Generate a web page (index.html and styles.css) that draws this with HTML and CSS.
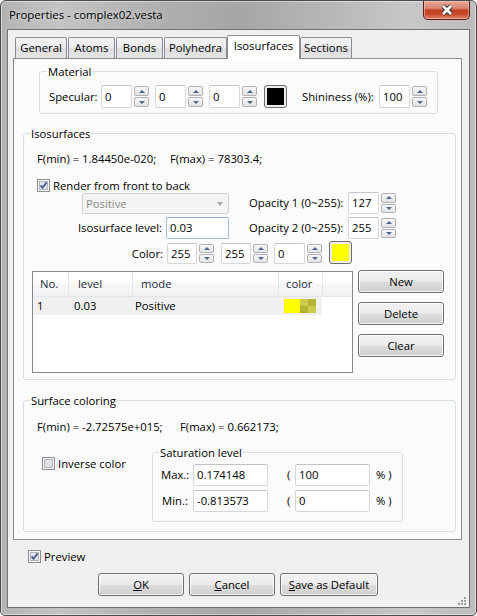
FILE: index.html
```html
<!DOCTYPE html>
<html>
<head>
<meta charset="utf-8">
<title>Properties - complex02.vesta</title>
<link rel="stylesheet" href="styles.css">
</head>
<body>
<div class="window">
  <div class="titlebar">
    <span class="title">Properties - complex02.vesta</span>
    <div class="close">
      <svg width="14" height="12" viewBox="0 0 14 12"><path d="M3 2 L11 10 M11 2 L3 10" stroke="#3a3a3a" stroke-width="4.6" fill="none"/><path d="M3 2 L11 10 M11 2 L3 10" stroke="#ffffff" stroke-width="2.6" fill="none"/></svg>
    </div>
  </div>
  <div class="client">
    <div class="tabs">
      <div class="tab t-general">General</div>
      <div class="tab t-atoms">Atoms</div>
      <div class="tab t-bonds">Bonds</div>
      <div class="tab t-poly">Polyhedra</div>
      <div class="tab sel t-iso">Isosurfaces</div>
      <div class="tab t-sect">Sections</div>
    </div>
    <div class="page">
      <fieldset class="grp g-material">
        <legend class="lg-material">Material</legend>
        <div class="row mat-row">
          <span class="lbl w-spec">Specular:</span>
          <div class="tb w31">0</div>
          <div class="spin ml2"><span class="up"></span><span class="dn"></span></div>
          <div class="tb w31 ml6">0</div>
          <div class="spin ml2"><span class="up"></span><span class="dn"></span></div>
          <div class="tb w31 ml6">0</div>
          <div class="spin ml2"><span class="up"></span><span class="dn"></span></div>
          <div class="swatch ml7"><i class="black"></i></div>
          <span class="lbl w-shin">Shininess (%):</span>
          <div class="tb w31">100</div>
          <div class="spin ml2"><span class="up"></span><span class="dn"></span></div>
        </div>
      </fieldset>

      <fieldset class="grp g-iso">
        <legend class="lg-iso">Isosurfaces</legend>
        <div class="fline iso-f"><span class="fmin1">F(min) = 1.84450e-020;</span><span>F(max) = 78303.4;</span></div>
        <div class="checkrow iso-check">
          <svg class="cb" width="13" height="13" viewBox="0 0 13 13"><rect x="0.5" y="0.5" width="12" height="12" fill="#f6f6f6" stroke="#8e8f8f"/><rect x="2.5" y="2.5" width="8" height="8" fill="#e3e6ea" stroke="#b3b7bc"/><path d="M3.6 6.4 L5.6 8.8 L9.6 3.4" stroke="#4a5f97" stroke-width="1.9" fill="none"/></svg>
          <span class="cbtext">Render from front to back</span>
        </div>
        <div class="row rowA">
          <div class="combo"><span>Positive</span><i class="carrow"></i></div>
          <span class="lbl w-op">Opacity 1 (0~255):</span>
          <div class="tb w31 h22">127</div>
          <div class="spin ml2 h22"><span class="up"></span><span class="dn"></span></div>
        </div>
        <div class="row rowB">
          <span class="lbl rlbl w-lvl">Isosurface level:</span>
          <div class="tb w63 h22 focus">0.03</div>
          <span class="lbl w-op ml20">Opacity 2 (0~255):</span>
          <div class="tb w31 h22">255</div>
          <div class="spin ml2 h22"><span class="up"></span><span class="dn"></span></div>
        </div>
        <div class="row rowC">
          <span class="lbl rlbl w-col">Color:</span>
          <div class="tb w30 h21 mt2">255</div>
          <div class="spin ml2 h21 mt2"><span class="up"></span><span class="dn"></span></div>
          <div class="tb w30 h21 mt2 ml7">255</div>
          <div class="spin ml2 h21 mt2"><span class="up"></span><span class="dn"></span></div>
          <div class="tb w31 h21 mt2 ml6">0</div>
          <div class="spin ml2 h21 mt2"><span class="up"></span><span class="dn"></span></div>
          <div class="swatch ml7"><i class="yellow"></i></div>
        </div>
        <div class="row listrow">
          <div class="list">
            <div class="lhead">
              <span class="hc c1">No.</span>
              <span class="hc c2">level</span>
              <span class="hc c3">mode</span>
              <span class="hc c4">color</span>
            </div>
            <div class="lrow">
              <span class="rc r1">1</span>
              <span class="rc r2">0.03</span>
              <span class="rc r3">Positive</span>
              <span class="rc r4"><i class="cyel"></i><i class="checker"><b class="lt"></b><b class="dk"></b><b class="dk"></b><b class="lt"></b></i></span>
            </div>
          </div>
          <div class="sidebtns">
            <div class="btn w86">New</div>
            <div class="btn w86">Delete</div>
            <div class="btn w86">Clear</div>
          </div>
        </div>
      </fieldset>

      <fieldset class="grp g-surf">
        <legend class="lg-iso">Surface coloring</legend>
        <div class="fline surf-f"><span class="fmin2">F(min) = -2.72575e+015;</span><span>F(max) = 0.662173;</span></div>
        <div class="row surfrow">
          <div class="checkrow inv-check">
            <svg class="cb" width="13" height="13" viewBox="0 0 13 13"><rect x="0.5" y="0.5" width="12" height="12" fill="#f6f6f6" stroke="#8e8f8f"/><rect x="2.5" y="2.5" width="8" height="8" fill="#dfe2e6" stroke="#b3b7bc"/></svg>
            <span class="cbtext">Inverse color</span>
          </div>
          <fieldset class="grp g-sat">
            <legend class="lg-iso">Saturation level</legend>
            <div class="row satrow sr1">
              <span class="lbl w-mm">Max.:</span>
              <div class="tb w75 h22">0.174148</div>
              <span class="lbl paren">(</span>
              <div class="tb w75 h22">100</div>
              <span class="lbl pct">% )</span>
            </div>
            <div class="row satrow sr2">
              <span class="lbl w-mm mn">Min.:</span>
              <div class="tb w75 h22">-0.813573</div>
              <span class="lbl paren">(</span>
              <div class="tb w75 h22">0</div>
              <span class="lbl pct">% )</span>
            </div>
          </fieldset>
        </div>
      </fieldset>
    </div>

    <div class="checkrow preview">
      <svg class="cb" width="13" height="13" viewBox="0 0 13 13"><rect x="0.5" y="0.5" width="12" height="12" fill="#f6f6f6" stroke="#8e8f8f"/><rect x="2.5" y="2.5" width="8" height="8" fill="#e3e6ea" stroke="#b3b7bc"/><path d="M3.6 6.4 L5.6 8.8 L9.6 3.4" stroke="#4a5f97" stroke-width="1.9" fill="none"/></svg>
      <span class="cbtext">Preview</span>
    </div>
    <div class="row bottombtns">
      <div class="btn w86"><u>O</u>K</div>
      <div class="btn w86"><u>C</u>ancel</div>
      <div class="btn w98"><u>S</u>ave as Default</div>
    </div>
    <svg class="grip" width="9" height="9" viewBox="0 0 9 9"><g fill="#a0a0a0"><rect x="7" y="1" width="2" height="2"/><rect x="4" y="4" width="2" height="2"/><rect x="7" y="4" width="2" height="2"/><rect x="1" y="7" width="2" height="2"/><rect x="4" y="7" width="2" height="2"/><rect x="7" y="7" width="2" height="2"/></g></svg>
  </div>
</div>
</body>
</html>
```

FILE: styles.css
```css
html, body {
  margin: 0;
  padding: 0;
  background: #ffffff;
}
body {
  font-family: "Open Sans", "Noto Sans", sans-serif;
  font-size: 11.3px;
  line-height: 15px;
  color: #000;
}
.window {
  width: 477px;
  height: 616px;
  box-sizing: border-box;
  border: 1px solid #4a4e52;
  border-radius: 6px 6px 5px 5px;
  padding: 0 6px 7px 6px;
  background: linear-gradient(90deg, #b3b3b3 0%, #c4c4c4 12%, #b0b0b0 32%, #a6a6a6 50%, #b6b6b6 68%, #c8c8c8 86%, #bcbcbc 100%);
  box-shadow: inset 0 0 0 1px rgba(255,255,255,0.45);
}
.titlebar {
  display: flex;
  height: 28px;
}
.title {
  padding: 6px 0 0 2px;
  line-height: 16px;
  font-size: 11.4px;
  color: #000;
  text-shadow: 0 0 5px rgba(255,255,255,0.7);
}
.close {
  margin-left: auto;
  width: 47px;
  height: 19px;
  box-sizing: border-box;
  border: 1px solid #5a1f16;
  border-top: none;
  border-radius: 0 0 5px 5px;
  background: linear-gradient(#e7a798 0%, #da8571 40%, #c43d20 52%, #c74a2e 75%, #e08a70 100%);
  box-shadow: inset 0 0 0 1px rgba(255,220,210,0.45);
  display: flex;
  align-items: center;
  justify-content: center;
}
.close svg { display: block; }
.client {
  position: relative;
  width: 463px;
  height: 579px;
  box-sizing: border-box;
  border: 1px solid #6f7275;
  background: #f0f0f0;
}
/* tabs */
.tabs {
  display: flex;
  align-items: flex-end;
  height: 23px;
  margin: 5px 0 0 5px;
  padding-left: 2px;
}
.tab {
  box-sizing: border-box;
  height: 21px;
  border: 1px solid #898c95;
  border-bottom: none;
  border-radius: 2px 2px 0 0;
  background: linear-gradient(#f4f4f4 0%, #ebebeb 50%, #dedede 51%, #e4e4e4 100%);
  text-align: center;
  padding-top: 2px;
  line-height: 15px;
  white-space: nowrap;
}
.tab.sel {
  position: relative;
  z-index: 1;
  height: 24px;
  margin-bottom: -1px;
  background: #ffffff;
  padding-top: 2px;
}
.t-general { width: 52px; margin-right: 1px; }
.t-atoms { width: 47px; margin-right: 1px; }
.t-bonds { width: 47px; margin-right: 1px; }
.t-poly { width: 63px; }
.t-iso { width: 73px; }
.t-sect { width: 52px; }

.page {
  margin-left: 5px;
  width: 449px;
  height: 482px;
  box-sizing: border-box;
  border: 1px solid #898c95;
  background: #fbfbfb;
}
/* group boxes */
.grp {
  margin: 0;
  padding: 0;
  min-inline-size: 0;
  box-sizing: border-box;
  border: 1px solid #d5dfe5;
  border-radius: 3px;
}
.grp legend {
  padding: 0 1px;
  line-height: 15px;
}
.g-material {
  margin: 5px 0 0 25px;
  width: 399px;
  padding-bottom: 5px;
}
.lg-material { margin-left: 7px; }
.lg-iso { margin-left: 6px; }
.g-iso {
  margin: 12px 0 0 9px;
  width: 433px;
  padding-bottom: 6px;
}
.g-surf {
  margin: 13px 0 0 9px;
  width: 433px;
  padding-bottom: 9px;
}
.g-sat {
  width: 251px;
  padding-bottom: 9px;
}
.row {
  display: flex;
  align-items: flex-start;
}
.mat-row { margin-top: 6px; height: 23px; }
.lbl {
  display: block;
  line-height: 23px;
  white-space: nowrap;
}
.w-spec { width: 52px; margin-left: 9px; }
.w-shin { width: 77px; margin-left: 15px; }
.tb {
  box-sizing: border-box;
  height: 23px;
  border: 1px solid #d3d6da;
  border-top-color: #c0c3c8;
  border-radius: 2px;
  background: #ffffff;
  padding-left: 3px;
  line-height: 21px;
  white-space: nowrap;
}
.tb.focus { border-color: #9fbfdf; border-top-color: #8fb0d3; }
.h22 { height: 22px; line-height: 20px; }
.h21 { height: 21px; line-height: 19px; }
.w30 { width: 30px; }
.w31 { width: 31px; }
.w63 { width: 63px; }
.w75 { width: 75px; }
.ml2 { margin-left: 2px; }
.ml6 { margin-left: 6px; }
.ml7 { margin-left: 7px; }
.ml20 { margin-left: 20px; }
.mt2 { margin-top: 2px; }
.spin {
  box-sizing: border-box;
  width: 15px;
  height: 23px;
  padding: 1px 0;
  display: flex;
  flex-direction: column;
  gap: 1px;
}
.spin.h22 { height: 22px; line-height: normal; }
.spin.h21 { height: 21px; line-height: normal; }
.spin span {
  flex: 1;
  box-sizing: border-box;
  border: 1px solid #aeb2b8;
  border-radius: 2px;
  background: linear-gradient(#f7f7f7, #e3e3e3);
  display: flex;
  align-items: center;
  justify-content: center;
}
.spin .up::after {
  content: "";
  width: 0;
  height: 0;
  border-left: 3px solid transparent;
  border-right: 3px solid transparent;
  border-bottom: 3px solid #4d6691;
}
.spin .dn::after {
  content: "";
  width: 0;
  height: 0;
  border-left: 3px solid transparent;
  border-right: 3px solid transparent;
  border-top: 3px solid #4d6691;
}
.swatch {
  box-sizing: border-box;
  width: 23px;
  height: 23px;
  border: 1px solid #6f6f6f;
  border-radius: 3px;
  padding: 2px;
  background: #ececec;
}
.swatch i { display: block; width: 100%; height: 100%; }
.swatch .black { background: #000; }
.swatch .yellow { background: #ffff00; }

/* isosurfaces */
.fline { display: flex; white-space: nowrap; }
.iso-f { margin: 10px 0 0 13px; }
.surf-f { margin: 11px 0 0 13px; }
.fmin1 { width: 133px; }
.fmin2 { width: 143px; }
.checkrow {
  display: flex;
  align-items: center;
  height: 13px;
  line-height: 13px;
  white-space: nowrap;
}
.cb { display: block; flex: none; }
.cbtext { margin-left: 3px; }
.iso-check { margin: 13px 0 0 13px; }
.rowA { height: 22px; }
.combo {
  box-sizing: border-box;
  margin: 1px 0 0 58px;
  width: 147px;
  height: 21px;
  border: 1px solid #d0d0d0;
  border-radius: 3px;
  background: #f4f4f4;
  color: #8a8a8a;
  padding-left: 3px;
  line-height: 19px;
  display: flex;
  align-items: center;
}
.carrow {
  margin-left: auto;
  margin-right: 5px;
  width: 0;
  height: 0;
  border-left: 3.5px solid transparent;
  border-right: 3.5px solid transparent;
  border-top: 4px solid #a8a8a8;
}
.w-op { width: 99px; margin-left: 20px; line-height: 22px; }
.rowA .w-op { margin-left: 20px; }
.rowB { margin-top: 3px; height: 22px; }
.rlbl { text-align: right; box-sizing: border-box; padding-right: 4px; }
.w-lvl { width: 142px; line-height: 22px; }
.rowC { margin-top: 2px; height: 23px; }
.w-col { width: 143px; line-height: 23px; padding-top: 1px; }

.listrow { margin-top: 6px; }
.list {
  margin: 1px 0 0 8px;
  width: 321px;
  height: 102px;
  box-sizing: border-box;
  border: 1px solid #828790;
  background: #ffffff;
}
.lhead {
  display: flex;
  height: 25px;
  box-sizing: border-box;
  border-bottom: 1px solid #e3e6ea;
  background: linear-gradient(#ffffff 0%, #ffffff 45%, #f6f7f9 46%, #f1f2f4 100%);
  color: #1c2a3a;
}
.hc {
  box-sizing: border-box;
  height: 24px;
  line-height: 24px;
  border-right: 1px solid #e3e6ea;
  white-space: nowrap;
}
.c1 { width: 36px; padding-left: 7px; }
.c2 { width: 64px; padding-left: 9px; }
.c3 { width: 146px; padding-left: 8px; }
.c4 { width: 44px; padding-left: 7px; }
.lrow {
  display: flex;
  width: 289px;
  height: 18px;
  background: #f0f0f0;
  line-height: 18px;
}
.rc { box-sizing: border-box; white-space: nowrap; }
.r1 { width: 36px; padding-left: 4px; }
.r2 { width: 64px; padding-left: 5px; }
.r3 { width: 146px; padding-left: 2px; }
.r4 { width: 43px; padding: 2px 0 0 5px; display: flex; align-items: flex-start; }
.cyel { display: block; width: 16px; height: 14px; background: #ffff00; }
.checker {
  display: grid;
  grid-template-columns: 8px 8px;
  grid-template-rows: 7px 7px;
}
.checker b { display: block; }
.checker .lt { background: #cccc4c; }
.checker .dk { background: #b2b233; }

.sidebtns {
  margin-left: 5px;
  display: flex;
  flex-direction: column;
  gap: 9px;
}
.btn {
  box-sizing: border-box;
  height: 23px;
  border: 1px solid #707070;
  border-radius: 3px;
  background: linear-gradient(#f2f2f2 0%, #ebebeb 50%, #dddddd 51%, #cfcfcf 100%);
  box-shadow: inset 0 0 0 1px rgba(255,255,255,0.75);
  text-align: center;
  line-height: 21px;
  white-space: nowrap;
}
.w86 { width: 86px; }
.w98 { width: 98px; }

/* surface coloring */
.surfrow { margin-top: 11px; }
.inv-check { width: 110px; margin: 12px 0 0 18px; }
.satrow { height: 22px; margin-left: 8px; }
.sr1 { margin-top: 4px; }
.sr2 { margin-top: 4px; }
.w-mm { width: 32px; line-height: 22px; }
.w-mm.mn { padding-left: 1px; box-sizing: border-box; }
.paren { width: 27px; box-sizing: border-box; padding-left: 19px; line-height: 22px; }
.pct { margin-left: 6px; line-height: 22px; }

/* bottom */
.preview { margin: 10px 0 0 20px; }
.bottombtns { margin: 10px 0 0 90px; gap: 5px; }
.grip {
  position: absolute;
  right: 3px;
  bottom: 2px;
}
```
